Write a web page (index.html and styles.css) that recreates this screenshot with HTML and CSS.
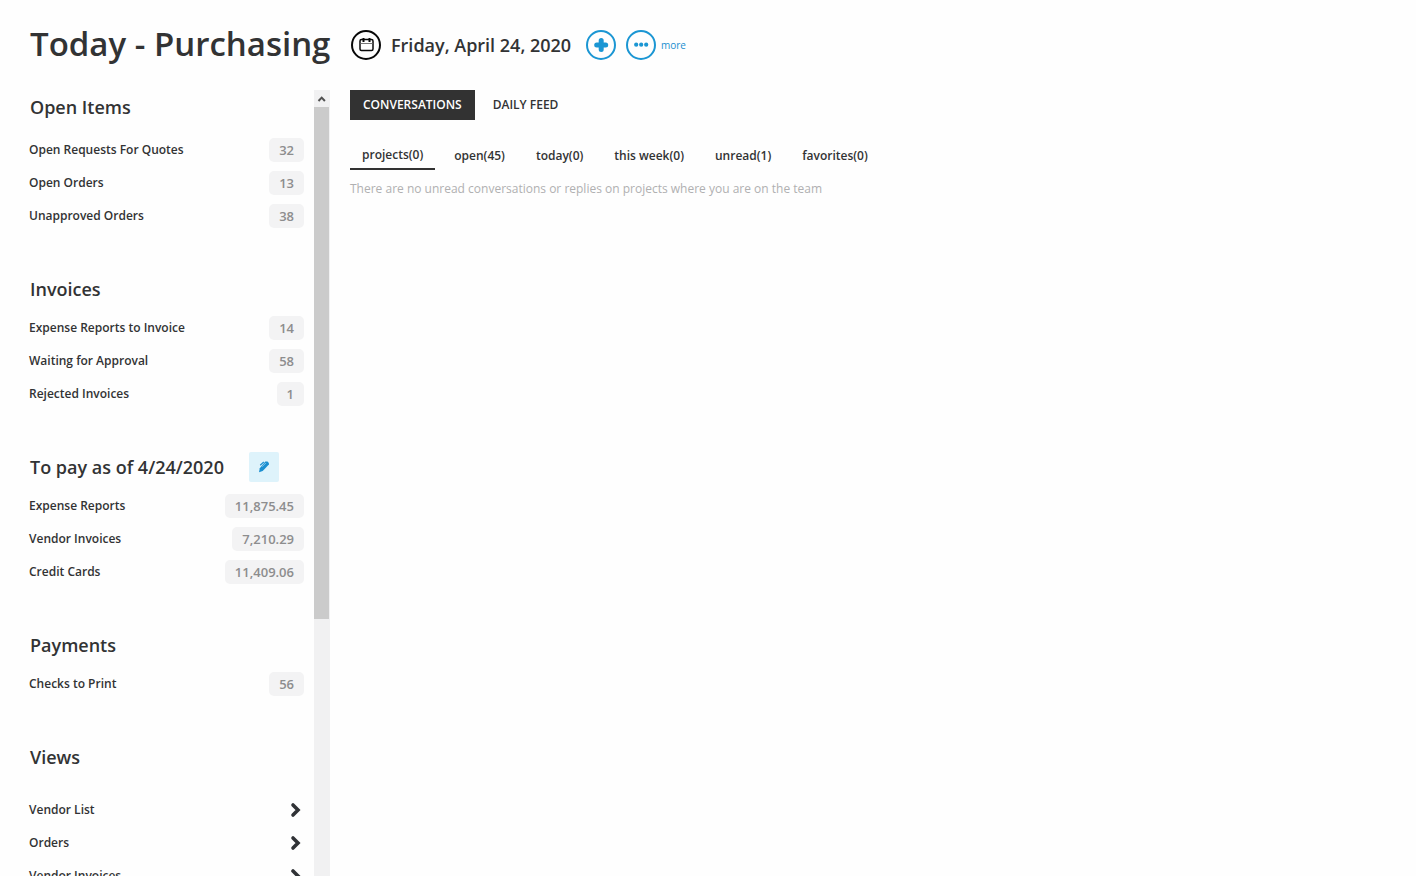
FILE: index.html
```html
<!DOCTYPE html>
<html lang="en">
<head>
<meta charset="utf-8">
<title>Today - Purchasing</title>
<link rel="stylesheet" href="styles.css">
</head>
<body>
<header class="header">
  <h1 class="title">Today - Purchasing</h1>
  <svg class="round-icon" viewBox="0 0 30 30" fill="none" stroke="#080808"><circle cx="15" cy="15" r="14" stroke-width="2"/><rect x="9" y="9.5" width="13" height="11" rx="1.5" stroke-width="1.5"/><path d="M9.5 13.5h12" stroke-width="1" stroke="#777"/><path d="M12.5 8v4M18.5 8v4" stroke-width="2"/></svg>
  <span class="date">Friday, April 24, 2020</span>
  <svg class="round-icon add" viewBox="0 0 30 30" fill="none" stroke="#1b96d3"><circle cx="15" cy="15" r="14" stroke-width="2"/><path d="M15.2 10.5v9M10.7 15h9" stroke-width="5" stroke-linecap="round"/></svg>
  <svg class="round-icon dots" viewBox="0 0 30 30" fill="#1b96d3"><circle cx="15" cy="15" r="14" fill="none" stroke="#1b96d3" stroke-width="2"/><circle cx="10.2" cy="14.7" r="2.1"/><circle cx="15.2" cy="14.7" r="2.1"/><circle cx="20.2" cy="14.7" r="2.1"/></svg>
  <a class="more">more</a>
</header>
<div class="layout">
  <aside class="sidebar">
    <section class="group open-items">
      <h2 class="heading">Open Items</h2>
      <div class="row"><span class="label">Open Requests For Quotes</span><span class="badge">32</span></div>
      <div class="row"><span class="label">Open Orders</span><span class="badge">13</span></div>
      <div class="row"><span class="label">Unapproved Orders</span><span class="badge">38</span></div>
    </section>
    <section class="group">
      <h2 class="heading">Invoices</h2>
      <div class="row"><span class="label">Expense Reports to Invoice</span><span class="badge">14</span></div>
      <div class="row"><span class="label">Waiting for Approval</span><span class="badge">58</span></div>
      <div class="row"><span class="label">Rejected Invoices</span><span class="badge">1</span></div>
    </section>
    <section class="group">
      <h2 class="heading">To pay as of 4/24/2020<span class="edit"><svg viewBox="0 0 30 30" fill="#1b8fd0"><path d="M16.3 9.5h2.2l1.4 1.5v1.6l-6.2 6.4-3.7 1.2.8-4z"/><path d="M11.2 13.2l3.6-3.2" stroke="#1b8fd0" stroke-width="1.2"/><path d="M13 14.8l3.8-3.8" stroke="#9bd3ef" stroke-width=".8"/></svg></span></h2>
      <div class="row"><span class="label">Expense Reports</span><span class="badge">11,875.45</span></div>
      <div class="row"><span class="label">Vendor Invoices</span><span class="badge">7,210.29</span></div>
      <div class="row"><span class="label">Credit Cards</span><span class="badge">11,409.06</span></div>
    </section>
    <section class="group">
      <h2 class="heading">Payments</h2>
      <div class="row"><span class="label">Checks to Print</span><span class="badge">56</span></div>
    </section>
    <section class="group views">
      <h2 class="heading">Views</h2>
      <div class="row"><span class="label">Vendor List</span><svg class="chevron" viewBox="0 0 12 16"><path d="M3 3l5 5-5 5"/></svg></div>
      <div class="row"><span class="label">Orders</span><svg class="chevron" viewBox="0 0 12 16"><path d="M3 3l5 5-5 5"/></svg></div>
      <div class="row"><span class="label">Vendor Invoices</span><svg class="chevron" viewBox="0 0 12 16"><path d="M3 3l5 5-5 5"/></svg></div>
    </section>
  </aside>
  <div class="scrollbar">
    <svg class="scroll-up" viewBox="0 0 16 17"><path d="M4.5 11l3.2-3.4 3.2 3.4"/></svg>
    <div class="thumb"></div>
  </div>
  <main class="main">
    <nav class="tabs"><a class="tab active">CONVERSATIONS</a><a class="tab">DAILY FEED</a></nav>
    <nav class="filters">
      <a class="filter current">projects(0)</a>
      <a class="filter">open(45)</a>
      <a class="filter">today(0)</a>
      <a class="filter">this week(0)</a>
      <a class="filter">unread(1)</a>
      <a class="filter">favorites(0)</a>
    </nav>
    <p class="empty">There are no unread conversations or replies on projects where you are on the team</p>
  </main>
</div>
</body>
</html>
```

FILE: styles.css
```css
* { box-sizing: border-box; }
body {
  margin: 0;
  height: 876px;
  overflow: hidden;
  display: flex;
  flex-direction: column;
  background: #fefefe;
  color: #323334;
  font: 600 12px "Open Sans", sans-serif;
}
.header { display: flex; align-items: center; height: 90px; padding-left: 30px; flex: none; }
.title { width: 321px; margin: 0; padding-bottom: 3px; font-size: 33px; line-height: 45px; font-weight: 600; white-space: nowrap; }
.round-icon { width: 30px; height: 30px; flex: none; }
.date { width: 195px; padding-left: 10px; margin-right: 10px; font-size: 18px; white-space: nowrap; }
.add { margin-left: 0; }
.dots { margin-left: 10px; }
.more { margin-left: 5px; font-size: 10px; font-weight: 400; color: #1b8fd0; }

.layout { display: flex; flex: 1; min-height: 0; }
.sidebar { width: 314px; padding: 5px 10px 0 29px; overflow: hidden; }
.group { margin-bottom: 45px; }
.heading { display: flex; align-items: center; height: 24px; margin: 0 0 10px 1px; font-size: 18px; font-weight: 600; white-space: nowrap; }
.open-items .heading { margin-bottom: 14px; }
.views .heading { margin-bottom: 24px; }
.edit { width: 30px; height: 30px; margin-left: 25px; background: #def3fb; border-radius: 2px; }
.edit svg { display: block; }
.row { display: flex; align-items: center; justify-content: space-between; height: 33px; }
.label { white-space: nowrap; }
.badge { height: 24px; padding: 0 10px; border-radius: 5px; background: #f3f3f4; color: #8d8d8e; font-size: 13px; line-height: 24px; }
.chevron { width: 12px; height: 16px; margin-right: 2px; fill: none; stroke: #303236; stroke-width: 3.6; stroke-linecap: round; }

.scrollbar { width: 16px; background: #f1f1f2; }
.scroll-up { display: block; width: 16px; height: 17px; fill: none; stroke: #505050; stroke-width: 2; }
.thumb { width: 15px; height: 512px; background: #cbcbcb; }

.main { padding-left: 20px; }
.tabs { display: flex; height: 30px; line-height: 30px; }
.tab { padding: 0 13px; margin-right: 5px; }
.active { background: #323232; color: #fff; }
.filters { display: flex; height: 50px; padding-top: 20px; }
.filter { height: 30px; padding: 0 12px; margin-right: 7px; line-height: 32px; white-space: nowrap; }
.current { line-height: 29px; border-bottom: 2px solid #323232; }
.empty { margin: 10px 0 0; line-height: 18px; font-weight: 400; color: #b0b0b1; }
```
